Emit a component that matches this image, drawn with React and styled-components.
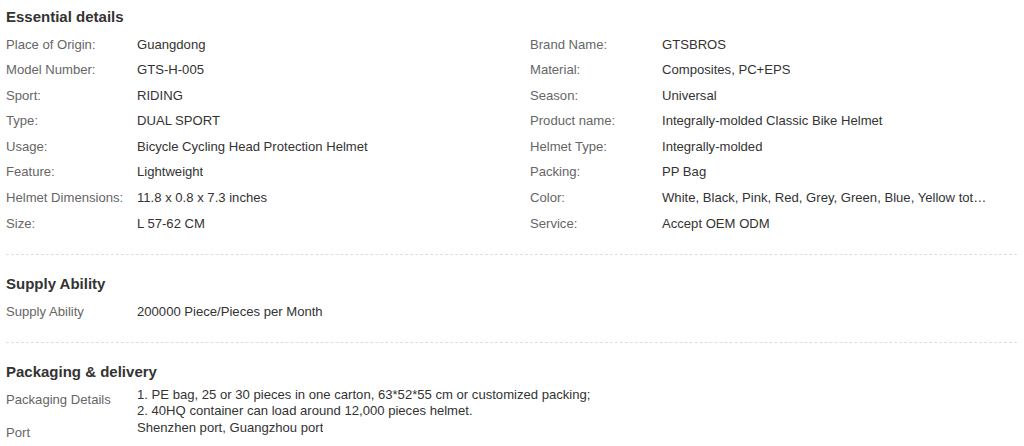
import React from 'react';
import styled, { createGlobalStyle } from 'styled-components';

const GlobalStyle = createGlobalStyle`
  html, body {
    margin: 0;
    padding: 0;
    background: #fff;
  }
  body {
    font-family: "Liberation Sans", Arial, sans-serif;
    color: #333;
  }
`;

const Page = styled.div`
  padding: 0 7px 0 6px;
`;

const Section = styled.section`
  padding-top: ${({ $first }) => ($first ? '6.5px' : '18.5px')};
  padding-bottom: 18px;
  border-bottom: ${({ $last }) => ($last ? 'none' : '1px dashed #dedede')};
`;

const Heading = styled.h3`
  margin: 0 0 5px;
  font-size: 15px;
  line-height: 20px;
  font-weight: bold;
  color: #333;
`;

const Grid = styled.div`
  display: grid;
  grid-template-columns: 524px 1fr;
`;

const Row = styled.div`
  display: flex;
  align-items: flex-start;
  font-size: 13.1px;
  min-width: 0;
`;

const Label = styled.div`
  flex: 0 0 ${({ $w }) => $w || 131}px;
  line-height: 25.6px;
  color: #666;
  white-space: nowrap;
`;

const Value = styled.div`
  line-height: ${({ $multi }) => ($multi ? '16.6px' : '25.6px')};
  max-width: ${({ $multi }) => ($multi ? 'none' : '328px')};
  color: #333;
  white-space: ${({ $multi }) => ($multi ? 'normal' : 'nowrap')};
  overflow: hidden;
  text-overflow: ellipsis;
`;

const essential = [
  ['Place of Origin:', 'Guangdong', 'Brand Name:', 'GTSBROS'],
  ['Model Number:', 'GTS-H-005', 'Material:', 'Composites, PC+EPS'],
  ['Sport:', 'RIDING', 'Season:', 'Universal'],
  ['Type:', 'DUAL SPORT', 'Product name:', 'Integrally-molded Classic Bike Helmet'],
  ['Usage:', 'Bicycle Cycling Head Protection Helmet', 'Helmet Type:', 'Integrally-molded'],
  ['Feature:', 'Lightweight', 'Packing:', 'PP Bag'],
  [
    'Helmet Dimensions:',
    '11.8 x 0.8 x 7.3 inches',
    'Color:',
    'White, Black, Pink, Red, Grey, Green, Blue, Yellow total 8 colors',
  ],
  ['Size:', 'L 57-62 CM', 'Service:', 'Accept OEM ODM'],
];

export default function App() {
  return (
    <Page>
      <GlobalStyle />
      <Section $first>
        <Heading>Essential details</Heading>
        <Grid>
          {essential.map(([l1, v1, l2, v2]) => (
            <React.Fragment key={l1}>
              <Row>
                <Label>{l1}</Label>
                <Value>{v1}</Value>
              </Row>
              <Row>
                <Label $w={132}>{l2}</Label>
                <Value>{v2}</Value>
              </Row>
            </React.Fragment>
          ))}
        </Grid>
      </Section>

      <Section>
        <Heading>Supply Ability</Heading>
        <Row>
          <Label>Supply Ability</Label>
          <Value>200000 Piece/Pieces per Month</Value>
        </Row>
      </Section>

      <Section $last>
        <Heading>Packaging &amp; delivery</Heading>
        <Row>
          <Label>Packaging Details</Label>
          <Value $multi>
            1. PE bag, 25 or 30 pieces in one carton, 63*52*55 cm or customized packing;
            <br />
            2. 40HQ container can load around 12,000 pieces helmet.
          </Value>
        </Row>
        <Row>
          <Label>Port</Label>
          <Value $multi>Shenzhen port, Guangzhou port</Value>
        </Row>
      </Section>
    </Page>
  );
}
